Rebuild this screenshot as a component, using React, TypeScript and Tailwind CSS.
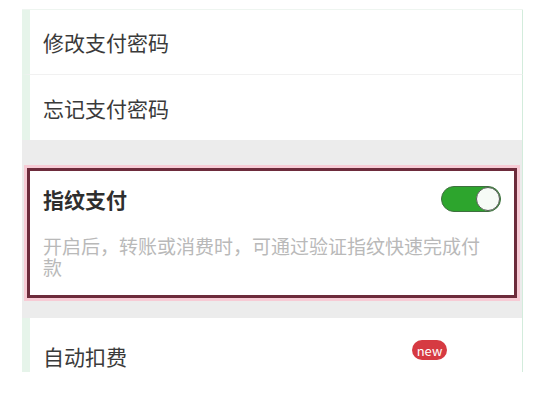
import React from 'react';

const font = { fontFamily: '"Noto Sans CJK SC", "Noto Sans", sans-serif' };

function Row({ label, last }: { label: string; last?: boolean }) {
  return (
    <div
      className={`flex h-[65px] items-center border-l-[8px] border-r border-l-[#e6f4ea] border-r-[#d3ecdc] bg-white pl-[13px] ${
        last ? '' : 'border-b border-b-[#f1f1f1]'
      }`}
    >
      <span className="text-[21px] leading-[28px] text-[#3a3a3a]">{label}</span>
    </div>
  );
}

export default function App() {
  return (
    <div className="h-[402px] w-[541px] overflow-hidden bg-white pt-[9px]" style={font}>
      <div className="ml-[22px] h-[363px] w-[501px] overflow-hidden border-t border-t-[#eef5f0]">
        <Row label="修改支付密码" />
        <Row label="忘记支付密码" last />

        <div className="border-r border-r-[#d3ecdc] bg-[#ececec] px-[5px] pt-[28px] pb-[20px]">
          <div className="h-[130px] border-[3px] border-[#6d2b3b] bg-white shadow-[0_0_0_3px_#f7cbd5]">
            <div className="flex items-center justify-between pt-[14px] pl-[13px] pr-[13px]">
              <span className="text-[21px] font-bold leading-[28px] text-[#2e2e2e]">指纹支付</span>
              <div className="flex h-[26px] w-[60px] items-center justify-end rounded-full border border-[#3f6f3f] bg-[#2da52d]">
                <div className="h-[24px] w-[24px] rounded-full border border-[#5a5a5a] bg-[#f6fbf6]" />
              </div>
            </div>
            <p className="mt-[22px] w-[465px] pl-[13px] text-[19px] leading-[21px] text-[#b9b9b9]">
              开启后，转账或消费时，可通过验证指纹快速完成付款
            </p>
          </div>
        </div>

        <div className="flex h-[62px] items-start border-l-[8px] border-r border-l-[#e6f4ea] border-r-[#d3ecdc] bg-white pl-[13px]">
          <span className="mt-[26px] text-[21px] leading-[24px] text-[#3a3a3a]">自动扣费</span>
          <span className="mt-[22px] mr-[75px] ml-auto flex h-[20px] w-[35px] items-center justify-center rounded-full bg-[#d63a42] text-[13px] leading-none text-white">
            new
          </span>
        </div>
      </div>
    </div>
  );
}
